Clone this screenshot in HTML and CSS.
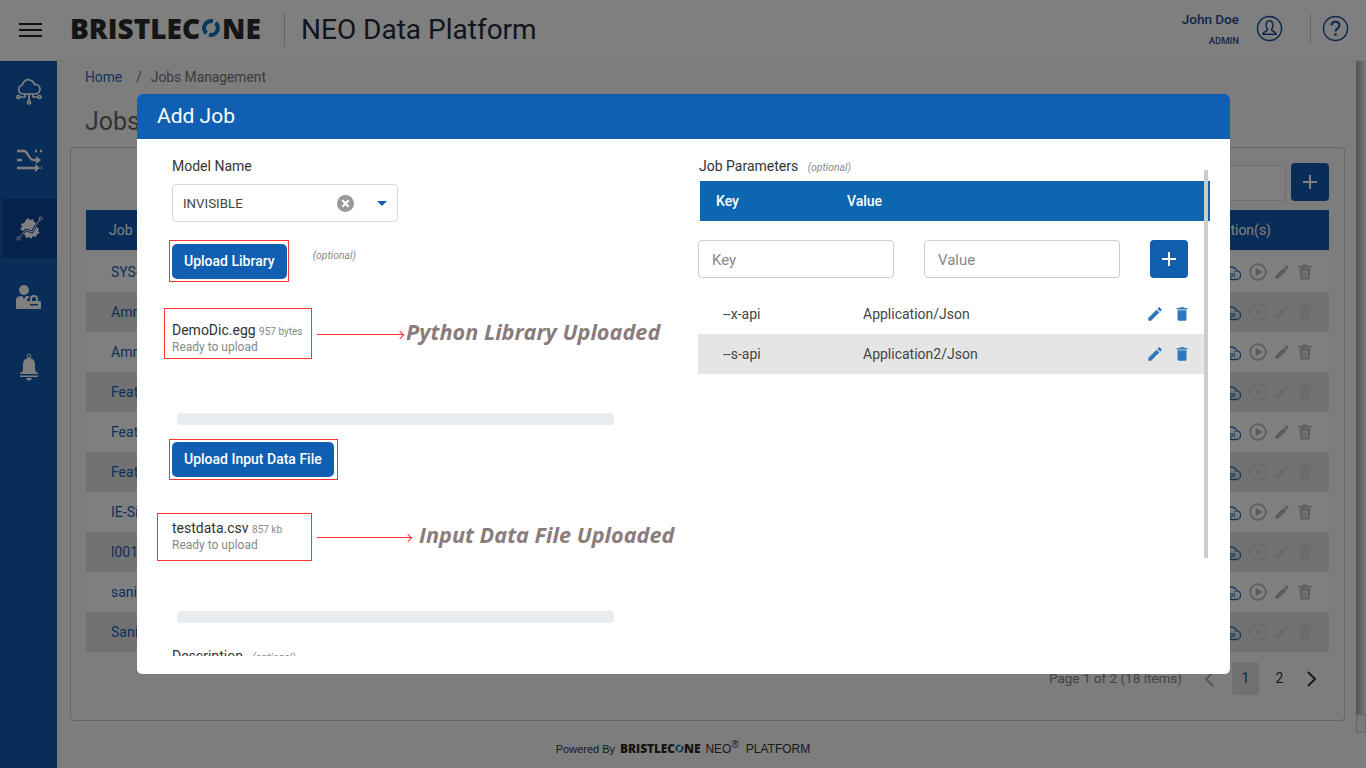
FILE: index.html
```html
<!DOCTYPE html>
<html lang="en">
<head>
    <meta charset="UTF-8">
    <meta name="viewport" content="width=device-width, initial-scale=1.0">
    <title>NEO Data Platform</title>
    <link rel="stylesheet" href="styles.css">
</head>
<body>
    <svg class="sprites" xmlns="http://www.w3.org/2000/svg">
        <symbol id="i-pencil" viewBox="0 0 24 24"><path d="M3 17.25V21h3.75L17.81 9.94l-3.75-3.75L3 17.25zM20.71 7.04c.39-.39.39-1.02 0-1.41l-2.34-2.34c-.39-.39-1.02-.39-1.41 0l-1.83 1.83 3.75 3.75 1.83-1.83z"/></symbol>
        <symbol id="i-trash" viewBox="0 0 24 24"><path d="M6 19c0 1.1.9 2 2 2h8c1.1 0 2-.9 2-2V7H6v12zM19 4h-3.5l-1-1h-5l-1 1H5v2h14V4z"/></symbol>
        <symbol id="i-bin" viewBox="0 0 24 24"><path d="M9 2h6v2h6v2H3V4h6zM5 7h14l-1 15H6zM8.500 9.500v10h1.500v-10zM11.250 9.500v10h1.500v-10zM14 9.500v10h1.500v-10z" fill-rule="evenodd"/></symbol>
        <symbol id="i-play" viewBox="0 0 24 24"><circle cx="12" cy="12" r="10.500" fill="none" stroke="currentColor" stroke-width="2.200"/><path d="M9 6.500l8.500 5.500-8.500 5.500z"/></symbol>
        <symbol id="i-cloud" viewBox="0 0 24 24"><path d="M7 20a5 5 0 0 1-1-9.800A7 7 0 0 1 19 10a5 5 0 0 1-1 10z" fill="none" stroke="currentColor" stroke-width="1.600"/></symbol>
        <symbol id="i-ring" viewBox="0 0 20 20"><path d="M12.500 1.400A9 9 0 0 0 4 16.700L6.800 13.700A5 5 0 0 1 11.500 5.200z"/><path d="M7.500 18.600A9 9 0 0 0 16 3.300L13.200 6.300A5 5 0 0 1 8.500 14.800z"/></symbol>
    </svg>

    <div class="app">
        <header class="topbar">
            <button class="menu-btn" aria-label="Menu"><span></span><span></span><span></span></button>
            <div class="logo">BRISTLEC<svg class="logo-o"><use href="#i-ring"/></svg>NE</div>
            <div class="product">NEO Data Platform</div>
            <div class="user">
                <div class="user-name">John Doe</div>
                <div class="user-role">ADMIN</div>
            </div>
            <svg class="top-icon" viewBox="0 0 28 28" fill="none" stroke="currentColor" stroke-width="1.500">
                <circle cx="14" cy="14" r="12.500"/>
                <path d="M10.500 11c0-3 1.500-5 3.500-5s3.500 2 3.500 5c0 2-1 3.500-1.500 4.500 0 1 4.500 1.500 5 4.500H7c.5-3 5-3.500 5-4.500-.5-1-1.500-2.500-1.500-4.500z"/>
            </svg>
            <div class="top-divider"></div>
            <svg class="top-icon help-icon" viewBox="0 0 28 28" fill="none" stroke="currentColor" stroke-width="1.500">
                <circle cx="14" cy="14" r="12.500"/>
                <path d="M10 11c0-2.500 1.800-4 4-4s4 1.500 4 3.800c0 3-4 3-4 6.200" stroke-width="2.200"/>
                <path d="M14 19v2.500" stroke-width="2.400"/>
            </svg>
        </header>

        <div class="shell">
            <nav class="sidebar">
                <div class="side-item">
                    <svg viewBox="0 0 28 28" fill="none" stroke="currentColor" stroke-width="1.700">
                        <path d="M8 17a4.500 4.500 0 0 1-1-8.800C8 4 12 2 15 3c2.500.7 4 2.500 4.500 4.500A4.800 4.800 0 0 1 21 17z"/>
                        <path d="M14 17v7M10 17v3H5M18 17v3h5"/>
                        <circle cx="14" cy="25.500" r="1.500"/><circle cx="3.500" cy="20" r="1.500"/><circle cx="24.500" cy="20" r="1.500"/>
                    </svg>
                </div>
                <div class="side-item">
                    <svg viewBox="0 0 28 28" fill="none" stroke="currentColor" stroke-width="2.400">
                        <path d="M2 5h7c4 0 5 9 9 9h6M2 14h5M2 22h21"/>
                        <path d="M21 10l5 4-5 4zM20 18l5 4-5 4z" fill="currentColor" stroke="none"/>
                        <path d="M20 5h2M25 5h2M26 22h1" stroke-width="2.400"/>
                    </svg>
                </div>
                <div class="side-item active">
                    <svg viewBox="0 0 28 28">
                        <path fill="currentColor" d="M10 5l2-2 2 2 3-1 1 3 3 1-1 3 3 3-1 2 2 2-3 1-1 3-3-1-2 3-2-2-3 1-1-3-3-1 1-3-3-2 2-2-1-3 3-1z"/>
                        <path d="M3 23l7-8 6 2 8-13" fill="none" stroke="#094495" stroke-width="2.400"/>
                        <path d="M3 23l7-8 6 2 8-13" fill="none" stroke="currentColor" stroke-width="1"/>
                        <circle cx="24.500" cy="3.500" r="1.600" fill="none" stroke="currentColor"/>
                        <circle cx="2.500" cy="23.500" r="1.600" fill="none" stroke="currentColor"/>
                    </svg>
                </div>
                <div class="side-item">
                    <svg viewBox="0 0 28 28" fill="currentColor">
                        <circle cx="9" cy="6" r="5"/>
                        <path d="M1 25v-9c0-3 3-4 6-4l2 3 2-3c1.500 0 3 .3 4 1-2 1-3 2.500-3 4v8z"/>
                        <path d="M15 17v-2a4 4 0 0 1 8 0v2h-2v-2a2 2 0 0 0-4 0v2z"/>
                        <path d="M13 17h12a1 1 0 0 1 1 1v6a1 1 0 0 1-1 1H13a1 1 0 0 1-1-1v-6a1 1 0 0 1 1-1zM15 20v1.500h8V20z" fill-rule="evenodd"/>
                    </svg>
                </div>
                <div class="side-item">
                    <svg viewBox="0 0 28 28" fill="currentColor">
                        <circle cx="14" cy="3" r="1.800" fill="none" stroke="currentColor"/>
                        <path d="M14 5c-4 0-6 3-6 6v5c0 2-1 3-3 4v1h18v-1c-2-1-3-2-3-4v-5c0-3-2-6-6-6z"/>
                        <path d="M5 22.500h18v1.500H5zM11 25h6c-.5 1.500-1.500 2.500-3 2.500s-2.500-1-3-2.500z"/>
                    </svg>
                </div>
            </nav>

            <main class="content">
                <div class="breadcrumb"><a>Home</a><span class="sep">/</span><span>Jobs Management</span></div>
                <h1 class="page-title">Jobs Management</h1>
                <section class="card">
                    <div class="toolbar">
                        <div class="search"></div>
                        <button class="add-btn add-btn-bg"><span class="plus"></span></button>
                    </div>
                    <div class="jobs-head"><span>Job Name</span><span>Action(s)</span></div>
                    <div class="job-row"><a>SYS-</a><div class="row-icons"><svg class="cloud" viewBox="0 0 24 24"><use href="#i-cloud"/><text x="12" y="17.500">api</text></svg><svg class="play"><use href="#i-play"/></svg><svg class="pen"><use href="#i-pencil"/></svg><svg class="bin"><use href="#i-bin"/></svg></div></div>
                    <div class="job-row off"><a>Amr</a><div class="row-icons"><svg class="cloud" viewBox="0 0 24 24"><use href="#i-cloud"/><text x="12" y="17.500">api</text></svg><svg class="play"><use href="#i-play"/></svg><svg class="pen"><use href="#i-pencil"/></svg><svg class="bin"><use href="#i-bin"/></svg></div></div>
                    <div class="job-row"><a>Amr</a><div class="row-icons"><svg class="cloud" viewBox="0 0 24 24"><use href="#i-cloud"/><text x="12" y="17.500">api</text></svg><svg class="play"><use href="#i-play"/></svg><svg class="pen"><use href="#i-pencil"/></svg><svg class="bin"><use href="#i-bin"/></svg></div></div>
                    <div class="job-row off"><a>Feat</a><div class="row-icons"><svg class="cloud" viewBox="0 0 24 24"><use href="#i-cloud"/><text x="12" y="17.500">api</text></svg><svg class="play"><use href="#i-play"/></svg><svg class="pen"><use href="#i-pencil"/></svg><svg class="bin"><use href="#i-bin"/></svg></div></div>
                    <div class="job-row"><a>Feat</a><div class="row-icons"><svg class="cloud" viewBox="0 0 24 24"><use href="#i-cloud"/><text x="12" y="17.500">api</text></svg><svg class="play"><use href="#i-play"/></svg><svg class="pen"><use href="#i-pencil"/></svg><svg class="bin"><use href="#i-bin"/></svg></div></div>
                    <div class="job-row off"><a>Feat</a><div class="row-icons"><svg class="cloud" viewBox="0 0 24 24"><use href="#i-cloud"/><text x="12" y="17.500">api</text></svg><svg class="play"><use href="#i-play"/></svg><svg class="pen"><use href="#i-pencil"/></svg><svg class="bin"><use href="#i-bin"/></svg></div></div>
                    <div class="job-row"><a>IE-Si</a><div class="row-icons"><svg class="cloud" viewBox="0 0 24 24"><use href="#i-cloud"/><text x="12" y="17.500">api</text></svg><svg class="play"><use href="#i-play"/></svg><svg class="pen"><use href="#i-pencil"/></svg><svg class="bin"><use href="#i-bin"/></svg></div></div>
                    <div class="job-row off"><a>l001</a><div class="row-icons"><svg class="cloud" viewBox="0 0 24 24"><use href="#i-cloud"/><text x="12" y="17.500">api</text></svg><svg class="play"><use href="#i-play"/></svg><svg class="pen"><use href="#i-pencil"/></svg><svg class="bin"><use href="#i-bin"/></svg></div></div>
                    <div class="job-row"><a>sani</a><div class="row-icons"><svg class="cloud" viewBox="0 0 24 24"><use href="#i-cloud"/><text x="12" y="17.500">api</text></svg><svg class="play"><use href="#i-play"/></svg><svg class="pen"><use href="#i-pencil"/></svg><svg class="bin"><use href="#i-bin"/></svg></div></div>
                    <div class="job-row off"><a>Sani</a><div class="row-icons"><svg class="cloud" viewBox="0 0 24 24"><use href="#i-cloud"/><text x="12" y="17.500">api</text></svg><svg class="play"><use href="#i-play"/></svg><svg class="pen"><use href="#i-pencil"/></svg><svg class="bin"><use href="#i-bin"/></svg></div></div>
                    <div class="pager">
                        <span class="pager-info">Page 1 of 2 (18 items)</span>
                        <svg class="chev chev-off" viewBox="0 0 12 18"><path d="M10 2L3 9l7 7"/></svg>
                        <span class="page-num current">1</span>
                        <span class="page-num">2</span>
                        <svg class="chev" viewBox="0 0 12 18"><path d="M2 2l7 7-7 7"/></svg>
                    </div>
                </section>
                <footer class="page-foot">
                    <span class="powered">Powered By</span>
                    <span class="foot-logo">BRISTLEC<svg class="foot-o"><use href="#i-ring"/></svg>NE</span>
                    <span class="foot-neo">NEO<sup>®</sup></span>
                    <span class="foot-neo">PLATFORM</span>
                </footer>
            </main>
            <div class="page-scroll"><div class="page-scroll-end"></div></div>
        </div>
    </div>

    <div class="backdrop">
        <div class="modal">
            <div class="modal-head">Add Job</div>
            <div class="modal-body">
                <div class="col-left">
                    <label class="field-label">Model Name</label>
                    <div class="select">
                        <span class="select-value">INVISIBLE</span>
                        <svg class="select-clear" viewBox="0 0 16 16"><circle cx="8" cy="8" r="8" fill="#999"/><path d="M5 5l6 6M11 5l-6 6" stroke="#fff" stroke-width="2"/></svg>
                        <span class="select-caret"></span>
                    </div>

                    <div class="upload-row">
                        <div class="marked">
                            <button class="btn">Upload Library</button>
                            <div class="red-box box-btn-lib"></div>
                        </div>
                        <span class="optional opt-upload">(optional)</span>
                    </div>

                    <div class="file-info info-lib">
                        <div class="file-name">DemoDic.egg <small>957 bytes</small></div>
                        <div class="file-status">Ready to upload</div>
                        <div class="red-box box-lib"></div>
                        <div class="arrow arrow-lib"></div>
                        <div class="callout callout-lib">Python Library Uploaded</div>
                    </div>
                    <div class="progress"></div>

                    <div class="upload-row row-data">
                        <div class="marked">
                            <button class="btn">Upload Input Data File</button>
                            <div class="red-box box-btn-data"></div>
                        </div>
                    </div>

                    <div class="file-info info-data">
                        <div class="file-name">testdata.csv <small>857 kb</small></div>
                        <div class="file-status">Ready to upload</div>
                        <div class="red-box box-data"></div>
                        <div class="arrow arrow-data"></div>
                        <div class="callout callout-data">Input Data File Uploaded</div>
                    </div>
                    <div class="progress"></div>

                    <div class="desc-label">Description <span class="optional">(optional)</span></div>
                </div>

                <div class="col-right">
                    <div class="params-title">Job Parameters <span class="optional">(optional)</span></div>
                    <div class="params-head"><span class="p-key">Key</span><span>Value</span></div>
                    <div class="params-form">
                        <div class="text-input">Key</div>
                        <div class="text-input">Value</div>
                        <button class="add-btn"><span class="plus"></span></button>
                    </div>
                    <div class="param-row">
                        <span class="p-key">--x-api</span><span class="p-value">Application/Json</span>
                        <svg class="p-icon"><use href="#i-pencil"/></svg><svg class="p-icon"><use href="#i-trash"/></svg>
                    </div>
                    <div class="param-row alt">
                        <span class="p-key">--s-api</span><span class="p-value">Application2/Json</span>
                        <svg class="p-icon"><use href="#i-pencil"/></svg><svg class="p-icon"><use href="#i-trash"/></svg>
                    </div>
                    <div class="modal-scroll"></div>
                </div>
            </div>
        </div>
    </div>
</body>
</html>
```

FILE: styles.css
```css
* {
    margin: 0;
    padding: 0;
    box-sizing: border-box;
}

html, body {
    height: 100%;
    overflow: hidden;
}

body {
    background: #fafafa;
    color: #333;
    font-family: Roboto, 'Liberation Sans', sans-serif;
    font-size: 14px;
}

button {
    font-family: inherit;
    border: 0;
}

.sprites {
    position: absolute;
    width: 0;
    height: 0;
}

.app {
    height: 100vh;
    display: flex;
    flex-direction: column;
}

/* top bar */
.topbar {
    height: 61px;
    flex: none;
    display: flex;
    align-items: center;
    background: #fff;
    border-bottom: 1px solid #f0f0f0;
    padding: 0 17px 3px 19px;
}

.menu-btn {
    width: 23px;
    height: 14px;
    display: flex;
    flex-direction: column;
    justify-content: space-between;
    background: none;
    margin: 2px 28px 0 0;
}

.menu-btn span {
    height: 2px;
    background: #222;
}

.logo {
    font-family: 'Open Sans', sans-serif;
    font-weight: 800;
    font-size: 28px;
    color: #2a2a2a;
    display: flex;
    align-items: center;
    line-height: 1;
    width: 191px;
    margin-bottom: 1px;
}

.logo-o {
    width: 20px;
    height: 20px;
    margin: 0 1px;
    fill: #0f70b5;
}

.product {
    margin: 2px 0 0 23px;
    padding-left: 16px;
    border-left: 1px solid #c8c8c8;
    height: 34px;
    line-height: 34px;
    font-size: 28px;
    color: #222b3a;
}

.user {
    margin-left: auto;
    text-align: right;
    color: #1c4f94;
    margin-right: 17px;
}

.user-name {
    font-size: 13.500px;
    font-weight: 500;
    margin-bottom: 8px;
}

.user-role {
    font-size: 9.500px;
    font-weight: 500;
}

.top-icon {
    width: 27px;
    height: 27px;
    color: #1c4f94;
}

.top-divider {
    width: 1px;
    height: 30px;
    background: #c8c8c8;
    margin: 0 11px 0 27px;
}

/* shell */
.shell {
    flex: 1;
    display: flex;
    min-height: 0;
}

.sidebar {
    width: 57px;
    flex: none;
    background: #115ab3;
    display: flex;
    flex-direction: column;
    gap: 10px;
}

.side-item {
    height: 59px;
    display: flex;
    align-items: center;
    justify-content: center;
    color: #fff;
}

.side-item.active {
    background: #094495;
    margin-left: 2px;
}

.side-item svg {
    width: 28px;
    height: 28px;
}

.content {
    flex: 1;
    min-width: 0;
    padding: 0 11px 0 13px;
    display: flex;
    flex-direction: column;
}

.breadcrumb {
    margin: 8px 0 0 15px;
    line-height: 17px;
    font-size: 13.800px;
    color: #777;
}

.breadcrumb a {
    color: #2c66b5;
}

.sep {
    margin: 0 9px 0 14px;
}

.page-title {
    margin: 21px 0 0 15px;
    font-size: 25px;
    font-weight: 400;
    line-height: 30px;
    color: #666;
}

.card {
    margin-top: 10px;
    height: 574px;
    border: 1px solid #ccc;
    border-radius: 4px;
    padding: 15px 15px 0;
}

.toolbar {
    display: flex;
    justify-content: flex-end;
    gap: 5px;
    height: 47px;
    align-items: flex-start;
}

.search {
    width: 200px;
    height: 36px;
    margin-top: 2px;
    border: 1px solid #ddd;
    border-radius: 4px;
    background: #fff;
}

.add-btn {
    width: 38px;
    height: 38px;
    border-radius: 4px;
    background: #115dae;
    display: flex;
    align-items: center;
    justify-content: center;
    flex: none;
}

.add-btn-bg {
    background: #115ab3;
}

.plus {
    width: 14px;
    height: 14px;
    background:
        linear-gradient(#fff, #fff) center / 100% 2px no-repeat,
        linear-gradient(#fff, #fff) center / 2px 100% no-repeat;
}

.jobs-head {
    height: 40px;
    background: #115ab3;
    color: #fff;
    display: flex;
    align-items: center;
    justify-content: space-between;
    padding: 0 58px 0 23px;
    margin-bottom: 2px;
}

.job-row {
    height: 40px;
    background: #fff;
    display: flex;
    align-items: center;
    justify-content: space-between;
    padding: 0 15px 0 25px;
}

.job-row a {
    color: #1c5fb0;
}

.job-row.off {
    background: #e5e5e5;
}

.row-icons {
    display: flex;
    align-items: center;
}

.row-icons svg {
    width: 18px;
    height: 18px;
    fill: #bbb;
    color: #bbb;
}

.row-icons .cloud {
    width: 21px;
    height: 21px;
    color: #2c72c0;
    fill: #2c72c0;
    margin-right: 8px;
}

.cloud text {
    font-size: 8px;
    font-weight: 700;
    text-anchor: middle;
}

.row-icons .pen {
    margin: 0 5px 0 6px;
}

.off .play, .off .pen, .off .bin {
    fill: #d2d2d2;
    color: #d2d2d2;
}

.pager {
    margin-top: 10px;
    display: flex;
    align-items: center;
    justify-content: flex-end;
    height: 33px;
    padding-right: 11px;
}

.pager-info {
    color: #888;
    font-size: 13.500px;
    margin: 0 21px 2px 0;
}

.chev {
    width: 12px;
    height: 18px;
    fill: none;
    stroke: #333;
    stroke-width: 2;
}

.chev-off {
    stroke: #aaa;
    margin-right: 17px;
}

.page-num {
    width: 27px;
    height: 33px;
    line-height: 33px;
    text-align: center;
    color: #333;
    border-radius: 3px;
    margin-right: 7px;
}

.page-num + .chev {
    margin-left: 6px;
}

.page-num.current {
    background: #e2e2e2;
    color: #1c4f94;
}

.page-foot {
    margin-top: 19px;
    display: flex;
    align-items: baseline;
    justify-content: center;
    gap: 4px;
    padding-right: 46px;
    font-family: 'Liberation Sans', Arial, sans-serif;
}

.powered {
    font-size: 11px;
    color: #333;
}

.foot-logo {
    font-family: 'Open Sans', sans-serif;
    font-weight: 800;
    font-size: 12px;
    color: #2a2a2a;
    letter-spacing: -0.1px;
    margin: 0 1px 0 1px;
}

.foot-o {
    width: 9px;
    height: 9px;
    fill: #0f70b5;
}

.foot-neo {
    font-size: 12px;
    color: #333;
    margin-right: 3px;
}

.foot-neo sup {
    font-size: 10px;
    line-height: 0;
}

.page-scroll {
    width: 10px;
    flex: none;
    height: 672px;
    background: linear-gradient(90deg, #a5a5a5, #f0f0f0);
    position: relative;
}

.page-scroll-end {
    position: absolute;
    left: 0;
    right: 0;
    bottom: 0;
    height: 19px;
    background: #f3f3f3;
    border: 1px solid #ccc;
}

/* modal */
.backdrop {
    position: fixed;
    inset: 0;
    background: rgba(0, 0, 0, 0.5);
    display: flex;
    justify-content: center;
    padding: 94px 0 0 1px;
}

.modal {
    width: 1093px;
    height: 580px;
    background: #fff;
    border-radius: 5px;
    overflow: hidden;
    align-self: flex-start;
}

.modal-head {
    height: 45px;
    line-height: 44px;
    background: #115fb2;
    color: #fff;
    font-size: 21px;
    padding-left: 20px;
}

.modal-body {
    height: 519px;
    display: flex;
    padding: 19px 0 0 15px;
}

.col-left {
    width: 546px;
    height: 498px;
    padding-left: 20px;
    overflow: hidden;
    flex: none;
}

.field-label {
    display: block;
    line-height: 16px;
    color: #333;
}

.select {
    width: 226px;
    height: 38px;
    margin-top: 10px;
    border: 1px solid #d8d8d8;
    border-radius: 4px;
    display: flex;
    align-items: center;
    padding: 0 10px 0 10px;
    color: #444;
}

.select-value {
    flex: 1;
    font-size: 13.300px;
}

.select-clear {
    width: 17px;
    height: 17px;
    margin-right: 23px;
}

.select-caret {
    width: 0;
    height: 0;
    border: 5px solid transparent;
    border-top: 5px solid #115fb2;
    border-bottom: 0;
}

.upload-row {
    margin-top: 22px;
    display: flex;
    align-items: flex-start;
}

.marked {
    position: relative;
}

.btn {
    display: block;
    height: 35px;
    padding: 0 12px 1px;
    background: #115fb2;
    color: #fff;
    font-size: 14px;
    font-weight: 500;
    border-radius: 5px;
}

.red-box {
    position: absolute;
    border: 1px solid #f33;
}

.box-btn-lib {
    inset: -4px -2px -3px -3px;
}

.box-btn-data {
    inset: -3px -4px -3px -3px;
}

.optional {
    font-size: 10.400px;
    font-style: italic;
    color: #888;
}

.opt-upload {
    margin: 5px 0 0 26px;
}

.file-info {
    position: relative;
    margin-top: 43px;
}

.file-name {
    font-size: 14px;
    line-height: 16px;
    color: #333;
}

.file-name small {
    font-size: 10px;
    line-height: 1;
    color: #888;
}

.file-status {
    font-size: 12px;
    line-height: 16px;
    padding-top: 1px;
    color: #888;
}

.box-lib {
    left: -8px;
    top: -14px;
    width: 148px;
    height: 51px;
}

.box-data {
    left: -15px;
    top: -7px;
    width: 155px;
    height: 48px;
}

.arrow {
    position: absolute;
    left: 145px;
    height: 1px;
    background: #f33;
}

.arrow::after {
    content: "";
    position: absolute;
    right: 0;
    top: -2px;
    width: 5px;
    height: 5px;
    border-top: 1px solid #f33;
    border-right: 1px solid #f33;
    transform: rotate(45deg);
}

.arrow-lib {
    top: 12px;
    width: 86px;
}

.arrow-data {
    top: 17px;
    width: 94px;
}

.callout {
    position: absolute;
    font-family: 'Open Sans', sans-serif;
    font-size: 21.700px;
    font-weight: 700;
    font-style: italic;
    color: #8a7c7c;
    white-space: nowrap;
    line-height: 28px;
}

.callout-lib {
    left: 234px;
    top: -4px;
}

.callout-data {
    left: 247px;
    top: 1px;
}

.progress {
    width: 437px;
    height: 12px;
    margin: 58px 0 0 5px;
    background: #e9ecef;
    border-radius: 4px;
}

.row-data {
    margin-top: 17px;
}

.desc-label {
    margin-top: 25px;
    line-height: 16px;
    color: #333;
}

.desc-label .optional {
    margin-left: 6px;
}

.col-right {
    position: relative;
    width: 512px;
}

.params-title {
    line-height: 16px;
    margin-left: 1px;
    color: #333;
}

.params-title .optional {
    margin-left: 6px;
}

.params-head {
    margin: 5px 0 0 2px;
    height: 40px;
    background: #0d66b0;
    color: #fff;
    font-weight: 500;
    display: flex;
    align-items: center;
}

.params-head .p-key {
    width: 147px;
    padding-left: 16px;
}

.params-form {
    display: flex;
    align-items: center;
    gap: 30px;
    margin-top: 19px;
    width: 490px;
}

.text-input {
    width: 196px;
    height: 38px;
    line-height: 39px;
    padding-left: 13px;
    border: 1px solid #ccd;
    border-radius: 4px;
    color: #888;
    font-size: 15px;
}

.param-row {
    width: 510px;
    height: 40px;
    display: flex;
    align-items: center;
    color: #444;
}

.params-form + .param-row {
    margin-top: 16px;
}

.param-row.alt {
    background: #e5e5e5;
}

.param-row .p-key {
    width: 165px;
    padding-left: 25px;
}

.p-value {
    width: 283px;
}

.p-icon {
    width: 18px;
    height: 18px;
    fill: #2f78bd;
    margin-right: 9px;
}

.modal-scroll {
    position: absolute;
    left: 506px;
    top: 12px;
    width: 4px;
    height: 388px;
    background: #ccc;
}
```
